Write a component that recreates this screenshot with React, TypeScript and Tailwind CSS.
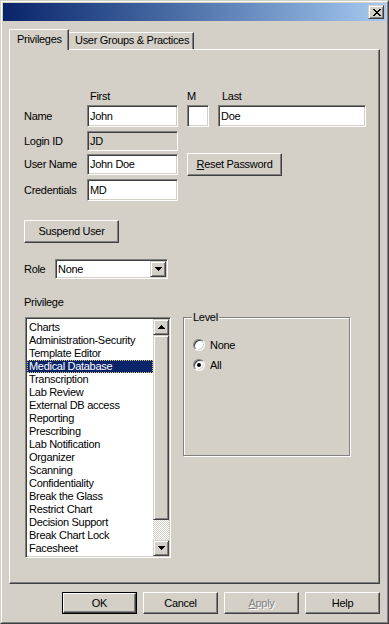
import React from "react";

const sunken =
  "border border-t-[#808080] border-l-[#808080] border-r-white border-b-white shadow-[inset_1px_1px_0_#404040,inset_-1px_-1px_0_#d4d0c8]";
const btnRaised =
  "border border-t-white border-l-white border-r-[#404040] border-b-[#404040] shadow-[inset_-1px_-1px_0_#808080] bg-[#d4d0c8]";
const sbRaised =
  "border border-t-[#d4d0c8] border-l-[#d4d0c8] border-r-[#404040] border-b-[#404040] shadow-[inset_1px_1px_0_#fff,inset_-1px_-1px_0_#808080] bg-[#d4d0c8]";

const items = [
  "Charts",
  "Administration-Security",
  "Template Editor",
  "Medical Database",
  "Transcription",
  "Lab Review",
  "External DB access",
  "Reporting",
  "Prescribing",
  "Lab Notification",
  "Organizer",
  "Scanning",
  "Confidentiality",
  "Break the Glass",
  "Restrict Chart",
  "Decision Support",
  "Break Chart Lock",
  "Facesheet",
  "Preferences Manager Module",
];

function UpTri() {
  return (
    <svg width="7" height="4" viewBox="0 0 7 4" shapeRendering="crispEdges">
      <path d="M3 0h1v1h-1zM2 1h3v1h-3zM1 2h5v1h-5zM0 3h7v1h-7z" fill="#000" />
    </svg>
  );
}
function DownTri() {
  return (
    <svg width="7" height="4" viewBox="0 0 7 4" shapeRendering="crispEdges">
      <path d="M0 0h7v1h-7zM1 1h5v1h-5zM2 2h3v1h-3zM3 3h1v1h-1z" fill="#000" />
    </svg>
  );
}

function Input({ w, h, value, disabled }: { w: string; h: string; value?: string; disabled?: boolean }) {
  return (
    <div className={`${sunken} ${w} ${h} ${disabled ? "bg-[#d4d0c8]" : "bg-white"} flex items-center pl-[2px]`}>
      {value}
    </div>
  );
}

function Radio({ checked }: { checked?: boolean }) {
  return (
    <div className="w-[12px] h-[12px] rounded-full bg-white border border-t-[#808080] border-l-[#808080] border-r-white border-b-white shadow-[inset_1px_1px_0_#404040,inset_-1px_-1px_0_#d4d0c8] flex items-center justify-center">
      {checked && <div className="w-[4px] h-[4px] rounded-full bg-black" />}
    </div>
  );
}

export default function App() {
  return (
    <div className="w-[389px] h-[624px] bg-[#d4d0c8] font-['Liberation_Sans',Arial,sans-serif] text-[11px] leading-[13px] tracking-[-0.3px] text-black border border-t-[#d4d0c8] border-l-[#d4d0c8] border-r-[#404040] border-b-[#404040]">
      <div className="w-full h-full border border-t-white border-l-white border-r-[#808080] border-b-[#808080] p-px flex flex-col">
        {/* Title bar */}
        <div className="h-[18px] bg-linear-to-r from-[#0a246a] to-[#a6caf0] flex items-center justify-end pr-[2px]">
          <div className={`${sbRaised} w-[16px] h-[14px] flex items-center justify-center pl-px`}>
            <svg width="8" height="7" viewBox="0 0 8 7" shapeRendering="crispEdges">
              <path
                d="M0 0h2v1h-2zM6 0h2v1h-2zM1 1h2v1h-2zM5 1h2v1h-2zM2 2h4v1h-4zM3 3h2v1h-2zM2 4h4v1h-4zM1 5h2v1h-2zM5 5h2v1h-2zM0 6h2v1h-2zM6 6h2v1h-2z"
                fill="#000"
              />
            </svg>
          </div>
        </div>

        {/* Tabs */}
        <div className="relative z-10 mt-[8px] ml-[6px] h-[21px] flex items-end">
          <div className="w-[60px] h-[21px] bg-[#d4d0c8] border-t border-l border-t-white border-l-white border-r border-r-[#404040] shadow-[inset_-1px_0_0_#808080] pl-[7px] pt-[3px]">
            Privileges
          </div>
          <div className="w-[125px] h-[17px] mb-[1px] border-t border-t-white border-r border-r-[#404040] shadow-[inset_-1px_0_0_#808080] pl-[6px] pt-[1px] whitespace-nowrap">
            User Groups &amp; Practices
          </div>
        </div>

        {/* Panel */}
        <div className="-mt-px ml-[6px] w-[371px] h-[535px] border border-t-white border-l-white border-r-[#404040] border-b-[#404040] shadow-[inset_-1px_-1px_0_#808080] pl-[14px] flex flex-col">
          <div className="mt-[40px] h-[13px] flex">
            <div className="w-[63px]" />
            <div className="w-[91px] pl-[3px]">First</div>
            <div className="ml-[9px] w-[22px]">M</div>
            <div className="ml-[9px] pl-[4px]">Last</div>
          </div>

          <div className="mt-[2px] h-[22px] flex items-center">
            <div className="w-[63px]">Name</div>
            <Input w="w-[91px]" h="h-[22px]" value="John" />
            <div className="ml-[9px]">
              <Input w="w-[22px]" h="h-[22px]" />
            </div>
            <div className="ml-[9px]">
              <Input w="w-[148px]" h="h-[22px]" value="Doe" />
            </div>
          </div>

          <div className="mt-[4px] h-[20px] flex items-center">
            <div className="w-[63px]">Login ID</div>
            <Input w="w-[91px]" h="h-[20px]" value="JD" disabled />
          </div>

          <div className="mt-[2px] h-[23px] flex items-center">
            <div className="w-[63px] whitespace-nowrap">User Name</div>
            <Input w="w-[91px]" h="h-[21px]" value="John Doe" />
            <div className={`${btnRaised} ml-[9px] w-[95px] h-[23px] flex items-center justify-center`}>
              <span>
                <span className="underline">R</span>eset Password
              </span>
            </div>
          </div>

          <div className="mt-[3px] h-[22px] flex items-center">
            <div className="w-[63px]">Credentials</div>
            <Input w="w-[91px]" h="h-[22px]" value="MD" />
          </div>

          <div className={`${btnRaised} mt-[19px] w-[95px] h-[23px] flex items-center justify-center`}>
            Suspend User
          </div>

          <div className="mt-[16px] h-[20px] flex items-center">
            <div className="w-[31px]">Role</div>
            <div className={`${sunken} w-[113px] h-[20px] bg-white p-px flex items-center`}>
              <div className="flex-1 pl-[1px]">None</div>
              <div className={`${sbRaised} w-[16px] h-[16px] flex items-center justify-center`}>
                <DownTri />
              </div>
            </div>
          </div>

          <div className="mt-[17px] h-[13px]">Privilege</div>

          <div className="mt-[8px] flex items-start">
            {/* List box */}
            <div className={`${sunken} ml-[1px] w-[146px] h-[241px] bg-white p-px flex`}>
              <div className="flex-1 overflow-hidden pt-[2px]">
                {items.map((it) =>
                  it === "Medical Database" ? (
                    <div
                      key={it}
                      className="h-[13px] pl-[2px] whitespace-nowrap bg-[#0a246a] text-white outline-1 outline-dotted outline-[#e0cc7a] -outline-offset-1"
                    >
                      {it}
                    </div>
                  ) : (
                    <div key={it} className="h-[13px] pl-[2px] whitespace-nowrap">
                      {it}
                    </div>
                  )
                )}
              </div>
              <div className="w-[16px] flex flex-col">
                <div className={`${sbRaised} h-[16px] flex items-center justify-center`}>
                  <UpTri />
                </div>
                <div className={`${sbRaised} h-[185px]`} />
                <div className="flex-1 bg-[repeating-conic-gradient(#d4d0c8_0_25%,#ffffff_0_50%)] bg-[length:2px_2px]" />
                <div className={`${sbRaised} h-[16px] flex items-center justify-center`}>
                  <DownTri />
                </div>
              </div>
            </div>

            {/* Level group */}
            <div className="relative ml-[12px] w-[167px] h-[139px] border border-[#808080] shadow-[inset_1px_1px_0_#fff,1px_1px_0_#fff] pl-[9px] pt-[21px] flex flex-col gap-[8px]">
              <div className="absolute -top-[7px] left-[8px] px-[1px] bg-[#d4d0c8]">Level</div>
              <div className="h-[12px] flex items-center gap-[5px]">
                <Radio />
                <span>None</span>
              </div>
              <div className="h-[12px] flex items-center gap-[5px]">
                <Radio checked />
                <span>All</span>
              </div>
            </div>
          </div>
        </div>

        {/* Bottom buttons */}
        <div className="mt-[8px] pr-[6px] flex justify-end gap-[6px]">
          <div className="w-[75px] h-[22px] border border-black">
            <div className={`${btnRaised} w-full h-full flex items-center justify-center`}>OK</div>
          </div>
          <div className={`${btnRaised} w-[75px] h-[22px] flex items-center justify-center`}>Cancel</div>
          <div className={`${btnRaised} w-[75px] h-[22px] flex items-center justify-center text-[#808080] [text-shadow:1px_1px_0_#fff]`}>
            <span>
              <span className="underline">A</span>pply
            </span>
          </div>
          <div className={`${btnRaised} w-[75px] h-[22px] flex items-center justify-center`}>Help</div>
        </div>
      </div>
    </div>
  );
}
